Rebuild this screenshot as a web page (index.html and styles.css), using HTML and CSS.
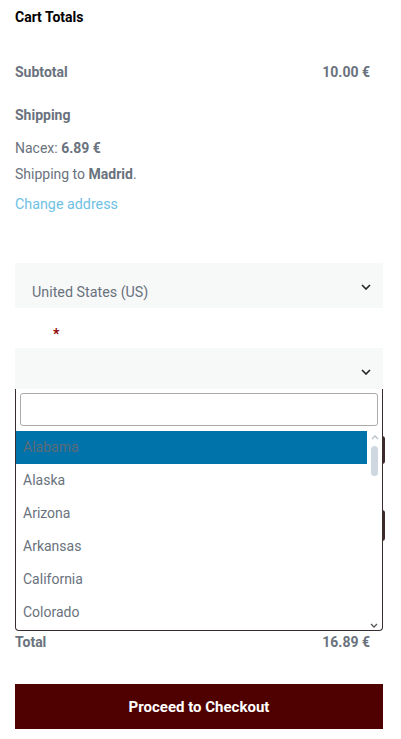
FILE: index.html
```html
<!DOCTYPE html>
<html>
<head>
<meta charset="utf-8">
<link rel="stylesheet" href="styles.css">
</head>
<body>
<div class="cart">
  <h2 class="title">Cart Totals</h2>
  <div class="row subtotal"><span>Subtotal</span><span>10.00 €</span></div>
  <div class="label shipping">Shipping</div>
  <div class="line nacex">Nacex: <b>6.89 €</b></div>
  <div class="line dest">Shipping to <b>Madrid</b>.</div>
  <a class="line change" href="#">Change address</a>

  <div class="select country">
    <span class="sel-text">United States (US)</span>
    <svg class="chev" width="10" height="6" viewBox="0 0 10 6"><path d="M1 1l4 4 4-4" fill="none" stroke="#222" stroke-width="1.6"/></svg>
  </div>

  <div class="req">*</div>

  <div class="state-wrap">
    <div class="select state">
      <span class="sel-text"></span>
      <svg class="chev" width="10" height="6" viewBox="0 0 10 6"><path d="M1 1l4 4 4-4" fill="none" stroke="#222" stroke-width="1.6"/></svg>
    </div>
    <div class="under">
      <div class="under-btn b1"></div>
      <div class="under-btn b2"></div>
    </div>
    <div class="dropdown">
      <div class="search"><input type="text" class="search-input"></div>
      <div class="list-wrap">
        <ul class="list">
          <li class="active">Alabama</li>
          <li>Alaska</li>
          <li>Arizona</li>
          <li>Arkansas</li>
          <li>California</li>
          <li>Colorado</li>
          <li>Connecticut</li>
        </ul>
        <div class="sbar">
          <svg class="sb-up" width="8" height="5" viewBox="0 0 8 5"><path d="M1 4l3-3 3 3" fill="none" stroke="#b8c0c8" stroke-width="1.3"/></svg>
          <div class="thumb"></div>
          <svg class="sb-down" width="8" height="5" viewBox="0 0 8 5"><path d="M1 1l3 3 3-3" fill="none" stroke="#555" stroke-width="1.3"/></svg>
        </div>
      </div>
    </div>
  </div>

  <div class="row total"><span>Total</span><span>16.89 €</span></div>

  <button class="checkout">Proceed to Checkout</button>
</div>
</body>
</html>
```

FILE: styles.css
```css
* { box-sizing: border-box; }
html, body { margin: 0; padding: 0; background: #fff; }
body {
  font-family: Roboto, "Liberation Sans", sans-serif;
  font-size: 14px;
  color: #69727d;
}
.cart { padding: 0 18px 0 15px; width: 401px; }
.title {
  margin: 0;
  padding-top: 8px;
  font-size: 14px;
  line-height: 18px;
  font-weight: 700;
  color: #000;
}
.row {
  display: flex;
  justify-content: space-between;
  font-weight: 700;
  line-height: 20px;
  padding-right: 13px;
}
.subtotal { margin-top: 36px; }
.label { font-weight: 700; line-height: 20px; }
.shipping { margin-top: 23px; }
.line { display: block; line-height: 20px; }
.nacex { margin-top: 13px; }
.dest { margin-top: 6px; }
.change { margin-top: 10px; color: #6ec1e4; text-decoration: none; font-size: 14.3px; }

.select {
  background: #f7f8f8;
  display: flex;
  justify-content: space-between;
  align-items: flex-start;
  padding: 0 12px 0 17px;
}
.country { margin-top: 49px; height: 45px; }
.country .sel-text { padding-top: 20px; line-height: 18px; color: #69727d; font-size: 14.3px; }
.chev { margin-top: 21px; }
.req {
  margin-top: 16px;
  padding-left: 38px;
  line-height: 20px;
  color: #8b0000;
  font-weight: 700;
  font-size: 14px;
}
.state-wrap { position: relative; margin-top: 4px; }
.state { height: 41px; }
.state .chev { margin-top: 21px; }
.under { height: 242px; display: flow-root; }
.under-btn { background: #3d2b2b; margin-right: -2px; border-radius: 3px; }
.b1 { margin-top: 47px; height: 28px; }
.b2 { margin-top: 46px; height: 31px; }

.dropdown {
  position: absolute;
  left: 0;
  right: 0;
  top: 41px;
  height: 242px;
  background: #fff;
  border: 1px solid #3a2c2c;
  border-top: none;
  border-radius: 0 0 4px 4px;
  overflow: hidden;
}
.search { padding: 4px; }
.search-input {
  display: block;
  width: 100%;
  height: 33px;
  border: 1px solid #aaa;
  border-radius: 3px;
  background: #fff;
  outline: none;
}
.list-wrap { display: flex; margin-top: 1px; height: 200px; }
.list {
  list-style: none;
  margin: 0;
  padding: 0;
  flex: 1;
  overflow: hidden;
}
.list li {
  height: 33px;
  line-height: 33px;
  padding-left: 7px;
  color: #69727d;
  font-size: 14px;
}
.list li.active { background: #0073aa; color: #5f6b77; }
.sbar {
  width: 15px;
  display: flex;
  flex-direction: column;
  align-items: center;
  position: relative;
}
.sb-up { margin-top: 4px; }
.thumb {
  margin-top: 6px;
  width: 7px;
  height: 30px;
  border-radius: 4px;
  background: #cfd8e1;
}
.sb-down { position: absolute; bottom: 3px; left: 3px; }

.total { margin-top: 1px; }
.checkout {
  display: block;
  margin-top: 32px;
  width: 100%;
  height: 45px;
  border: none;
  background: #4f0000;
  color: #fff;
  font-family: Roboto, "Liberation Sans", sans-serif;
  font-size: 15px;
  font-weight: 700;
  cursor: pointer;
}
```
